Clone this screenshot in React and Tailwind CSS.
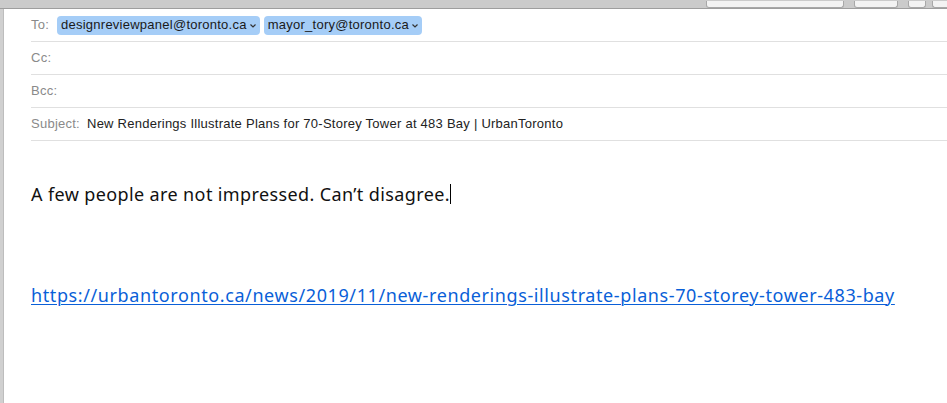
export default function App() {
  const rows = [
    { label: 'Cc:' },
    { label: 'Bcc:' },
  ];
  return (
    <div className="w-[947px] h-[403px] bg-[#c9c9c9] flex flex-col overflow-hidden" style={{ fontFamily: '"Helvetica Neue", "Liberation Sans", Arial, sans-serif' }}>
      {/* toolbar remnant */}
      <div className="h-[9px] flex items-end justify-end gap-[10px] border-b border-[#9e9e9e] bg-[#cbcbcb]">
        <div className="w-[138px] h-[7px] bg-[#f3f3f3] rounded-b-[3px] border border-t-0 border-[#a8a8a8]" />
        <div className="w-[44px] h-[7px] bg-[#f3f3f3] rounded-b-[3px] border border-t-0 border-[#a8a8a8]" />
        <div className="w-[18px] h-[7px] bg-[#f3f3f3] rounded-b-[3px] border border-t-0 border-[#a8a8a8] mr-[-4px]" />
        <div className="w-[18px] h-[7px] bg-[#f3f3f3] rounded-bl-[3px] border border-t-0 border-r-0 border-[#a8a8a8] mr-[-3px]" />
      </div>
      <div className="flex-1 flex">
        <div className="w-[4px] bg-[#d0d0d0] border-r border-[#bdbdbd]" />
        <div className="flex-1 bg-white flex flex-col">
          <div className="pl-[27px] tracking-[0.25px]">
            <div className="h-[33px] flex items-center border-b border-[#e0e0e0] text-[13px]">
              <span className="text-[#8a8a8a] w-[26px]">To:</span>
              <div className="flex gap-[4px]">
                <Token text="designreviewpanel@toronto.ca" />
                <Token text="mayor_tory@toronto.ca" />
              </div>
            </div>
            {rows.map((r) => (
              <div key={r.label} className="h-[33px] flex items-center border-b border-[#e0e0e0] text-[13px] text-[#8a8a8a]">
                {r.label}
              </div>
            ))}
            <div className="h-[33px] flex items-center border-b border-[#e0e0e0] text-[13px]">
              <span className="text-[#8a8a8a] w-[56px]">Subject:</span>
              <span className="text-[#222]">New Renderings Illustrate Plans for 70-Storey Tower at 483 Bay | UrbanToronto</span>
            </div>
          </div>
          <div className="pl-[27px] pt-[41px] text-[18px] text-[#111]" style={{ fontFamily: '"Noto Sans", Lato, sans-serif' }}>
            <div className="flex items-center h-[24px] tracking-[0.38px]">
              <span>A few people are not impressed. Can’t disagree.</span>
              <span className="inline-block w-[1px] h-[20px] bg-black" />
            </div>
            <div className="h-[76px]" />
            <a href="#" className="text-[#0a5fd8] underline underline-offset-2 decoration-1 tracking-[0.6px]">
              https://urbantoronto.ca/news/2019/11/new-renderings-illustrate-plans-70-storey-tower-483-bay
            </a>
          </div>
        </div>
      </div>
    </div>
  );
}

function Token({ text }) {
  return (
    <span className="h-[19px] flex items-center rounded-[4px] bg-[#a5cdf7] pl-[4px] pr-[3px] text-[#1a1a1a] text-[13px]">
      {text}
      <svg width="8" height="6" viewBox="0 0 8 6" className="ml-[2px] mt-[1px]">
        <path d="M1.5 1.5 L4 4 L6.5 1.5" fill="none" stroke="#333" strokeWidth="1.2" />
      </svg>
    </span>
  );
}
